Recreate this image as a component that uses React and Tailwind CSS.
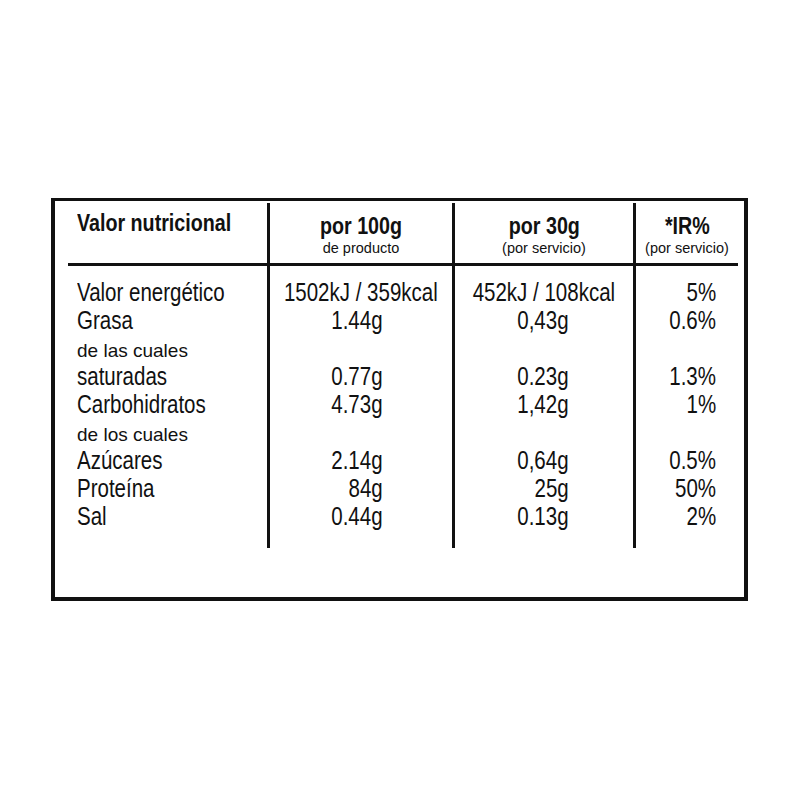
const rows = [
  { label: "Valor energético", a: "1502kJ / 359kcal", b: "452kJ / 108kcal", c: "5%", center: true },
  { label: "Grasa", a: "1.44g", b: "0,43g", c: "0.6%" },
  { label: "de las cuales", sub: true },
  { label: "saturadas", a: "0.77g", b: "0.23g", c: "1.3%" },
  { label: "Carbohidratos", a: "4.73g", b: "1,42g", c: "1%" },
  { label: "de los cuales", sub: true },
  { label: "Azúcares", a: "2.14g", b: "0,64g", c: "0.5%" },
  { label: "Proteína", a: "84g", b: "25g", c: "50%" },
  { label: "Sal", a: "0.44g", b: "0.13g", c: "2%" },
];

// the label face is a condensed grotesque; squeeze Liberation Sans to match
function Narrow({ children, origin = "origin-left" }) {
  return <span className={"inline-block scale-x-[0.82] whitespace-nowrap " + origin}>{children}</span>;
}

function HeadCell({ title, note, last }) {
  return (
    <div
      className={
        "h-[63px] border-b-[3px] border-[#111] pt-[10px] " + (last ? "" : "border-r-[3px]")
      }
    >
      <div className="flex justify-center text-[24px] font-bold leading-[26px]">
        <Narrow origin="origin-center">{title}</Narrow>
      </div>
      <div className="text-center text-[14.5px] leading-[18px]">{note}</div>
    </div>
  );
}

function ValueColumn({ field, pr, last }) {
  return (
    <div className={"pt-[12px] pb-[18px] border-[#111] " + (last ? "" : "border-r-[3px]")}>
      {rows.map((r, i) => {
        const centered = r.center && field !== "c";
        return (
          <div
            key={i}
            className={
              "flex h-[28px] text-[25px] leading-[28px] " + (centered ? "justify-center" : "justify-end")
            }
            style={centered ? undefined : { paddingRight: pr }}
          >
            {r.sub ? null : (
              <Narrow origin={centered ? "origin-center" : "origin-right"}>{r[field]}</Narrow>
            )}
          </div>
        );
      })}
    </div>
  );
}

export default function App() {
  return (
    <div className="min-h-[800px] bg-white pl-[51px] pt-[198px] font-['Liberation_Sans',Arial,sans-serif] text-[#111]">
      <div className="h-[403px] w-[697px] border-b-4 border-l-4 border-r-4 border-t-[3px] border-[#111] pl-[13px] pr-[6px] pt-[2px]">
        <div className="grid grid-cols-[202px_185px_181px_102px]">
          <div className="h-[63px] border-b-[3px] border-r-[3px] border-[#111] pl-[9px] pt-[7px]">
            <div className="text-[24px] font-bold leading-[26px]">
              <Narrow>Valor nutricional</Narrow>
            </div>
          </div>
          <HeadCell title="por 100g" note="de producto" />
          <HeadCell title="por 30g" note="(por servicio)" />
          <HeadCell title="*IR%" note="(por servicio)" last />

          <div className="border-r-[3px] border-[#111] pb-[18px] pl-[9px] pt-[12px]">
            {rows.map((r, i) =>
              r.sub ? (
                <div key={i} className="h-[28px] whitespace-nowrap text-[19px] leading-[34px]">
                  {r.label}
                </div>
              ) : (
                <div key={i} className="h-[28px] text-[25px] leading-[28px]">
                  <Narrow>{r.label}</Narrow>
                </div>
              )
            )}
          </div>
          <ValueColumn field="a" pr={69} />
          <ValueColumn field="b" pr={64} />
          <ValueColumn field="c" pr={22} last />
        </div>
      </div>
    </div>
  );
}
